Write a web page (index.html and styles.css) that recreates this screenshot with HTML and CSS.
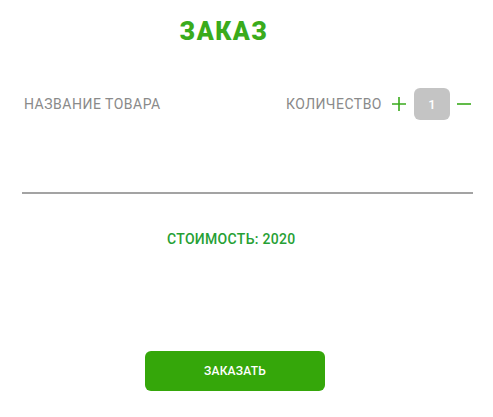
FILE: index.html
```html
<!DOCTYPE html>
<html lang="ru">
<head>
<meta charset="utf-8">
<link rel="stylesheet" href="styles.css">
</head>
<body>
<div class="page">
  <h1 class="title">ЗАКАЗ</h1>
  <div class="row">
    <span class="label">НАЗВАНИЕ ТОВАРА</span>
    <div class="qty">
      <span class="label">КОЛИЧЕСТВО</span>
      <button class="op plus" aria-label="plus"><svg width="16" height="16" viewBox="0 0 16 16"><path d="M8 1v14M1 8h14" stroke="#3aab1c" stroke-width="1.6" fill="none"/></svg></button>
      <span class="count">1</span>
      <button class="op minus" aria-label="minus"><svg width="16" height="16" viewBox="0 0 16 16"><path d="M1 8h14" stroke="#3aab1c" stroke-width="1.6" fill="none"/></svg></button>
    </div>
  </div>
  <div class="divider"></div>
  <div class="cost">СТОИМОСТЬ: 2020</div>
  <div class="actions"><button class="order">ЗАКАЗАТЬ</button></div>
</div>
</body>
</html>
```
FILE: styles.css
```css
html, body { margin: 0; padding: 0; background: #fff; }
body { font-family: "Roboto", "Liberation Sans", sans-serif; }
.page { width: 493px; height: 417px; box-sizing: border-box; padding: 19px 20px 0 22px; }
.title {
  margin: 0 0 0 152px;
  width: 100px;
  text-align: center;
  font-size: 25px;
  font-weight: 900;
  letter-spacing: 1.5px;
  color: #3aab1c;
  line-height: 26px;
}
.row {
  margin-top: 43px;
  display: flex;
  justify-content: space-between;
  align-items: center;
  padding: 0 1px 0 2px;
  height: 32px;
}
.label { font-size: 14px; color: #8a8a8a; letter-spacing: 0.5px; }
.qty { display: flex; align-items: center; }
.op { border: 0; background: none; padding: 0; margin: 0; width: 16px; height: 16px; display: flex; }
.plus { margin-left: 9px; }
.count {
  margin-left: 7px;
  width: 36px; height: 32px;
  border-radius: 6px;
  background: #c4c4c4;
  color: #fff;
  font-size: 13px;
  font-weight: 500;
  display: flex; align-items: center; justify-content: center;
}
.minus { margin-left: 6px; }
.divider { margin-top: 72px; width: 451px; height: 2px; background: #a3a3a3; }
.cost { margin: 37px 0 0 145px; font-size: 14px; font-weight: 500; letter-spacing: 0.3px; color: #26a034; }
.actions { margin-top: 104px; padding-left: 123px; }
.order {
  width: 180px; height: 40px;
  border: 0; border-radius: 6px;
  background: #35a70a;
  color: #fff;
  font-family: "Roboto", sans-serif;
  font-size: 12px; font-weight: 500;
  letter-spacing: 0.2px;
}
```
